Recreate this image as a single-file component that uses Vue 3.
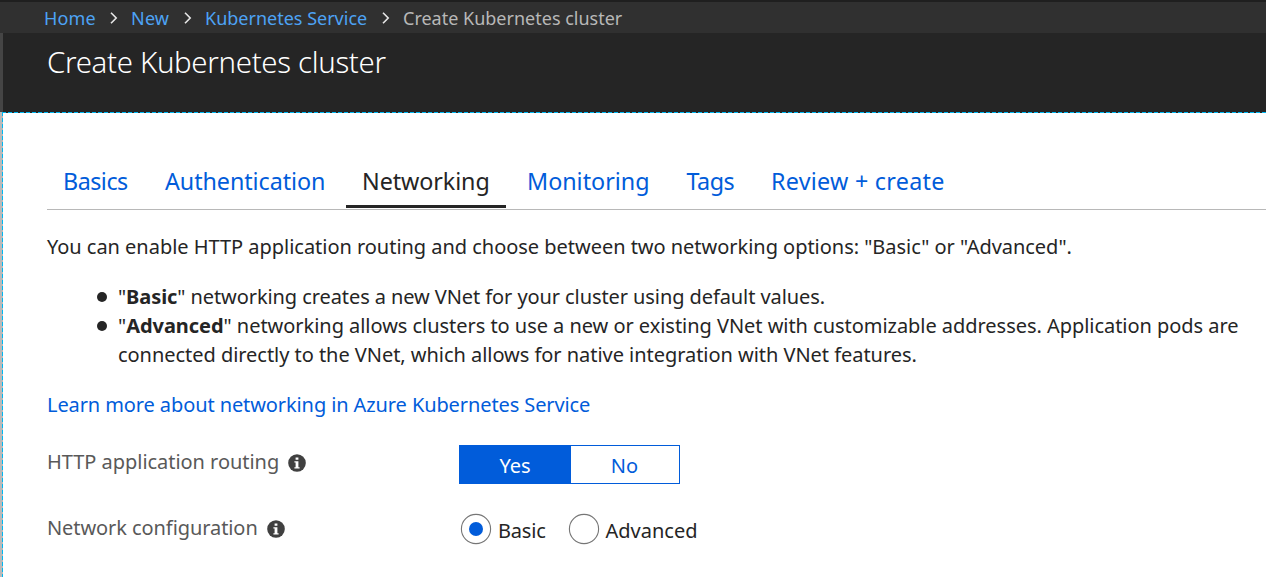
<script setup>
import { ref } from 'vue'

const trail = [
  { label: 'Home', cls: 'home' },
  { label: 'New', cls: 'new' },
  { label: 'Kubernetes Service', cls: 'service' },
]
const tabs = [
  { label: 'Basics', cls: 'basics' },
  { label: 'Authentication', cls: 'auth' },
  { label: 'Networking', cls: 'networking' },
  { label: 'Monitoring', cls: 'monitoring' },
  { label: 'Tags', cls: 'tags' },
  { label: 'Review + create', cls: 'review' },
]
const active = ref('Networking')
const routing = ref('Yes')
const network = ref('Basic')
</script>

<template>
  <div class="page">
    <nav class="crumbs">
      <template v-for="t in trail" :key="t.label">
        <a class="crumb" :class="t.cls">{{ t.label }}</a>
        <svg class="chevron" width="8" height="12" viewBox="0 0 8 12"><path d="M1 0.7 6.2 6 1 11.3" /></svg>
      </template>
      <span class="current">Create Kubernetes cluster</span>
    </nav>
    <header class="header"><h1>Create Kubernetes cluster</h1></header>
    <main class="blade">
      <div class="tabs">
        <a
          v-for="t in tabs"
          :key="t.label"
          class="tab"
          :class="[t.cls, { active: active === t.label }]"
          @click="active = t.label"
        >{{ t.label }}</a>
      </div>
      <p class="intro">You can enable HTTP application routing and choose between two networking options: "Basic" or "Advanced".</p>
      <ul class="options">
        <li class="short">"<b>Basic</b>" networking creates a new VNet for your cluster using default values.</li>
        <li class="long">"<b>Advanced</b>" networking allows clusters to use a new or existing VNet with customizable addresses. Application pods are<br>connected directly to the VNet, which allows for native integration with VNet features.</li>
      </ul>
      <a class="learn">Learn more about networking in Azure Kubernetes Service</a>
      <div class="row">
        <div class="label">
          <span>HTTP application routing</span>
          <svg class="info" width="18" height="18" viewBox="0 0 18 18"><circle cx="9" cy="9" r="8.8" /><path d="M7.6 3.5h2.8v2.3H7.6zM6.4 7.2h4v6h1.2v1.4H6.4v-1.4h1.2V8.6H6.4z" /></svg>
        </div>
        <div class="toggle">
          <button v-for="o in ['Yes', 'No']" :key="o" :class="{ on: routing === o }" @click="routing = o">{{ o }}</button>
        </div>
      </div>
      <div class="row second-row">
        <div class="label">
          <span>Network configuration</span>
          <svg class="info" width="18" height="18" viewBox="0 0 18 18"><circle cx="9" cy="9" r="8.8" /><path d="M7.6 3.5h2.8v2.3H7.6zM6.4 7.2h4v6h1.2v1.4H6.4v-1.4h1.2V8.6H6.4z" /></svg>
        </div>
        <div class="radios">
          <a v-for="o in ['Basic', 'Advanced']" :key="o" class="radio" @click="network = o">
            <svg width="32" height="32" viewBox="0 0 32 32">
              <circle class="ring" cx="16" cy="16" r="14.6" />
              <circle v-if="network === o" class="dot" cx="16" cy="16" r="7" />
            </svg>
            <span>{{ o }}</span>
          </a>
        </div>
      </div>
    </main>
  </div>
</template>

<style>
body { margin: 0; overflow: hidden; }
</style>

<style scoped>
.page {
  width: 1266px;
  height: 577px;
  overflow: hidden;
  display: flex;
  flex-direction: column;
  background: #fff;
  color: #252525;
  font-family: "Noto Sans", "Open Sans", sans-serif;
  font-size: 20px;
  line-height: 29px;
  white-space: nowrap;
}
.crumbs {
  box-sizing: border-box;
  height: 33px;
  flex: none;
  display: flex;
  align-items: center;
  padding-left: 44px;
  border-top: 2px solid #1f1f1f;
  background: #303030;
  font-size: 18px;
  line-height: 33px;
}
.crumb, .current { padding-top: 1px; }
.crumb { color: #4da3f5; }
.home { width: 66px; letter-spacing: 0.15px; }
.new { width: 53px; letter-spacing: 0.2px; }
.service { width: 177px; }
.chevron { flex: none; margin-right: 13px; }
.chevron path { fill: none; stroke: #e6e6e6; stroke-width: 1.6; }
.current { color: #b8b8b8; }
.header {
  box-sizing: border-box;
  height: 79px;
  flex: none;
  padding-left: 44px;
  border-left: 3px solid #454545;
  background: #252525;
}
h1 {
  margin: 0;
  color: #fff;
  font-size: 29.4px;
  font-weight: 300;
  line-height: 59px;
  letter-spacing: -0.32px;
}
.blade {
  flex: 1;
  position: relative;
  padding: 47px 0 0 47px;
}
.blade::before {
  content: "";
  position: absolute;
  inset: 0 auto 0 0;
  width: 3px;
  background:
    repeating-linear-gradient(to bottom, #00b7f1 0 4px, transparent 4px 6px) 2px 0 / 1px 100% no-repeat,
    #bababa;
}
.blade::after {
  content: "";
  position: absolute;
  inset: 0 0 auto 2px;
  height: 1px;
  background: repeating-linear-gradient(to right, #00b7f1 0 4px, #252525 4px 6px);
}
.tabs {
  display: flex;
  gap: 4px;
  height: 50px;
  border-bottom: 1px solid #b8b8b8;
  font-size: 23.3px;
  line-height: 44px;
}
.tab {
  box-sizing: border-box;
  height: 49px;
  padding-left: 16px;
  color: #015cda;
}
.tab.active { color: #252525; border-bottom: 3px solid #252525; }
.basics { width: 98px; letter-spacing: -0.5px; }
.auth { width: 193px; letter-spacing: -0.06px; }
.networking { width: 160px; letter-spacing: -0.08px; }
.monitoring { width: 156px; padding-left: 17px; }
.tags { width: 80px; padding-left: 16.5px; letter-spacing: -0.5px; }
.review { width: 206px; padding-left: 17px; letter-spacing: 0.27px; }
.intro { margin: 22px 0 0; letter-spacing: -0.03px; }
.options {
  margin: 21px 0 0;
  padding: 0 0 0 71px;
  list-style: none;
}
.options li { position: relative; }
.options li::before {
  content: "";
  position: absolute;
  left: -21px;
  top: 10px;
  width: 10px;
  height: 10px;
  border-radius: 50%;
  background: #252525;
}
.short { letter-spacing: -0.085px; }
.long { letter-spacing: -0.04px; }
.learn {
  display: block;
  margin-top: 21px;
  color: #015cda;
  letter-spacing: -0.1px;
}
.row { display: flex; margin-top: 26px; height: 39px; }
.second-row { margin-top: 28px; }
.label {
  width: 412px;
  display: flex;
  gap: 9px;
  margin-top: 2px;
  color: #595959;
  letter-spacing: -0.04px;
}
.second-row .label { margin-top: 1px; letter-spacing: -0.08px; }
.info { margin-top: 7px; }
.info circle { fill: #404040; }
.info path { fill: #fff; }
.toggle {
  box-sizing: border-box;
  width: 221px;
  height: 39px;
  display: flex;
  border: 1px solid #015cda;
}
.toggle button {
  flex: 1;
  padding: 0 1px 0 0;
  border: 0;
  background: #fff;
  color: #015cda;
  font: inherit;
  line-height: 39px;
}
.toggle button.on { flex: 0 0 111px; background: #015cda; color: #fff; }
.radios { display: flex; padding-left: 1px; }
.radio { display: flex; }
.radio:first-child { width: 107.5px; }
.radio svg { flex: none; margin: 1px 6px 0 0; }
.radio span { margin-top: 4px; }
.radio:first-child span { letter-spacing: -0.2px; }
.ring { fill: #fff; stroke: #767676; stroke-width: 1.1; }
.dot { fill: #015cda; }
</style>
